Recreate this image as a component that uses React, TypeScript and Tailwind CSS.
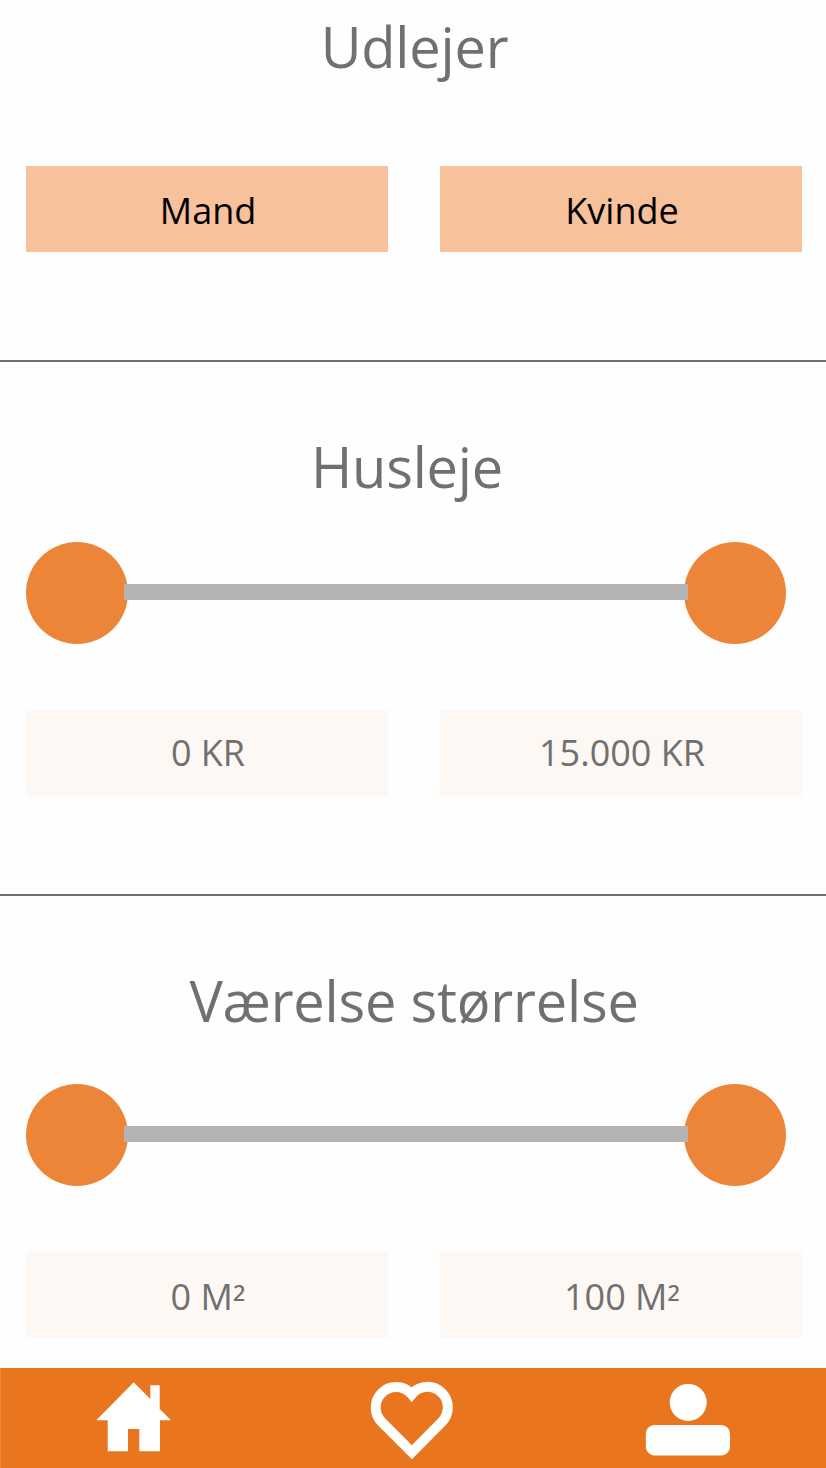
import React from "react";

function Heading({ children, className = "" }: { children: React.ReactNode; className?: string }) {
  return (
    <h2 className={`text-center text-[56px] leading-[76px] tracking-[-0.2px] text-[#707070] ${className}`}>
      {children}
    </h2>
  );
}

function Field({ children, className = "" }: { children: React.ReactNode; className?: string }) {
  return (
    <div
      className={`h-[86px] w-[362px] shrink-0 bg-[#fdf8f4] pl-[2px] text-center text-4xl leading-[86px] text-[#707070] ${className}`}
    >
      {children}
    </div>
  );
}

function Choice({ children }: { children: React.ReactNode }) {
  return (
    <button className="block h-[86px] w-[362px] shrink-0 bg-[#f7c19b] pt-1 pl-[2px] text-center text-4xl leading-[82px] text-black">
      {children}
    </button>
  );
}

function RangeSlider() {
  return (
    <div className="flex h-[102px] w-[760px] items-center">
      <div className="size-[102px] shrink-0 rounded-full bg-[#ec8537]" />
      <div className="z-10 -mx-1 -mt-[2px] h-4 flex-1 bg-[#b4b4b4]" />
      <div className="size-[102px] shrink-0 rounded-full bg-[#ec8537]" />
    </div>
  );
}

function HomeIcon() {
  return (
    <svg width="76" height="70" viewBox="96 1382 76 70" fill="white">
      <path d="M133.7 1382.3L150.3 1399V1385.3H159.7V1409L171 1420.3H160V1451.3H139.3V1429H128V1451.3H107.7V1420.3H96.3Z" />
    </svg>
  );
}

function HeartIcon() {
  return (
    <svg width="84" height="80" viewBox="370 1381 84 80" fill="none" stroke="white" strokeWidth="10">
      <path d="M411.7 1394.3A20.5 20.5 0 0 0 396.2 1387A20.5 20.5 0 0 0 375.7 1407.5A20.5 20.5 0 0 0 381.7 1422L411.9 1452.2L441.8 1422A20.5 20.5 0 0 0 447.8 1407.3A20.5 20.5 0 0 0 427.3 1386.8A20.5 20.5 0 0 0 411.7 1394.3Z" />
    </svg>
  );
}

function ProfileIcon() {
  return (
    <svg width="86" height="72" viewBox="645 1384 86 72" fill="white">
      <circle cx="688.2" cy="1402.4" r="18.5" />
      <rect x="645.8" y="1425" width="84.2" height="30.4" rx="8.7" />
    </svg>
  );
}

export default function App() {
  return (
    <main className="flex h-[1468px] w-[826px] flex-col overflow-hidden bg-[#fefefe] font-['Open_Sans','Noto_Sans',sans-serif]">
      <section className="h-[362px] border-b-2 border-[#707070] px-[26px] pt-2">
        <Heading className="pl-[3px]">Udlejer</Heading>
        <div className="mt-[82px] flex gap-[52px]">
          <Choice>Mand</Choice>
          <Choice>Kvinde</Choice>
        </div>
      </section>

      <section className="h-[534px] border-b-2 border-[#707070] px-[26px] pt-[66px]">
        <Heading className="pr-3">Husleje</Heading>
        <div className="mt-[38px]">
          <RangeSlider />
        </div>
        <div className="mt-[66px] flex gap-[52px]">
          <Field>0 KR</Field>
          <Field>15.000 KR</Field>
        </div>
      </section>

      <section className="h-[472px] px-[26px] pt-[66px]">
        <Heading className="pl-[2px]">Værelse størrelse</Heading>
        <div className="mt-[46px]">
          <RangeSlider />
        </div>
        <div className="mt-[66px] flex gap-[52px]">
          <Field className="pt-[2px]">
            0 M<span className="relative top-[6px]">²</span>
          </Field>
          <Field className="pt-[2px]">
            100 M<span className="relative top-[6px]">²</span>
          </Field>
        </div>
      </section>

      <nav className="flex h-[100px] items-start border-l border-[#ec8a47] bg-[#e9761e]">
        <a className="pt-[14px] pl-[95px]" aria-label="Hjem"><HomeIcon /></a>
        <a className="pt-[13px] pl-[198px]" aria-label="Favoritter"><HeartIcon /></a>
        <a className="pt-4 pl-[191px]" aria-label="Profil"><ProfileIcon /></a>
      </nav>
    </main>
  );
}
